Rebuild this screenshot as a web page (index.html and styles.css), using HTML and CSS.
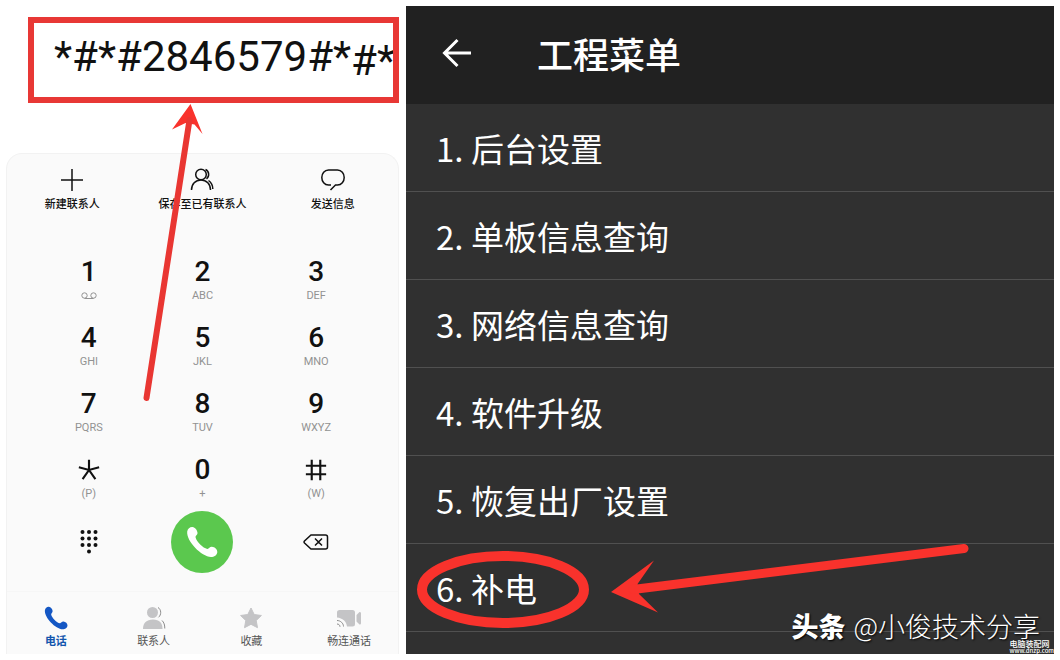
FILE: index.html
```html
<!DOCTYPE html>
<html lang="zh-CN">
<head>
<meta charset="utf-8">
<meta name="viewport" content="width=device-width, initial-scale=1">
<title>工程菜单</title>
<link rel="stylesheet" href="styles.css">
</head>
<body>
<main class="board">
  <section class="phone" aria-label="拨号">
    <div class="display">
      <output class="number">*#*#2846579#*<span class="number-tail">#*</span></output>
    </div>
    <div class="dialer">
      <div class="actions">
        <button class="action" type="button">
          <svg class="icon line" viewBox="0 0 24 24"><path d="M12 1v22M1 12h22"/></svg>
          <span>新建联系人</span>
        </button>
        <button class="action" type="button">
          <svg class="icon line" viewBox="0 0 24 24"><circle cx="11" cy="6.500" r="5.300"/><path d="M1.500 22c0-6 4-10 9.500-10s9.500 4 9.500 10M15.500 1.500c3.800 1.500 4.200 7 1 9.300M18.500 12.500c2.800 2 4.300 5 4.300 8.500"/></svg>
          <span>保存至已有联系人</span>
        </button>
        <button class="action" type="button">
          <svg class="icon line" viewBox="0 0 24 24"><path d="M10 17H7.500C3.500 17 .8 13.500 .8 9.500S3.500 2 7.500 2h9c4 0 6.700 3.500 6.700 7.500S20.500 17 16.500 17H14.500L9.500 22"/></svg>
          <span>发送信息</span>
        </button>
      </div>
      <div class="keys">
        <button class="key" type="button"><b>1</b><svg class="voicemail" viewBox="0 0 16 8"><circle cx="3.500" cy="3.500" r="2.700"/><circle cx="12.500" cy="3.500" r="2.700"/><path d="M3.500 6.500h9"/></svg></button>
        <button class="key" type="button"><b>2</b><small>ABC</small></button>
        <button class="key" type="button"><b>3</b><small>DEF</small></button>
        <button class="key" type="button"><b>4</b><small>GHI</small></button>
        <button class="key" type="button"><b>5</b><small>JKL</small></button>
        <button class="key" type="button"><b>6</b><small>MNO</small></button>
        <button class="key" type="button"><b>7</b><small>PQRS</small></button>
        <button class="key" type="button"><b>8</b><small>TUV</small></button>
        <button class="key" type="button"><b>9</b><small>WXYZ</small></button>
        <button class="key" type="button" aria-label="*"><svg class="symbol" viewBox="0 0 30 30"><path d="M15 5.500V15M5.500 12.500l9.500 2.500 9.500-2.500M9 23.500l6-8.500 6 8.500"/></svg><small>(P)</small></button>
        <button class="key" type="button"><b>0</b><small>+</small></button>
        <button class="key" type="button" aria-label="#"><svg class="symbol" viewBox="0 0 30 30"><path d="M11 5.500v19M19 5.500v19M5.500 11h19M5.500 19h19"/></svg><small>(W)</small></button>
      </div>
      <div class="call-row">
        <button class="tool" type="button" aria-label="键盘">
          <svg class="dots" viewBox="0 0 24 24"><g fill="#111"><circle cx="5.500" cy="2" r="2"/><circle cx="12" cy="2" r="2"/><circle cx="18.500" cy="2" r="2"/><circle cx="5.500" cy="8.500" r="2"/><circle cx="12" cy="8.500" r="2"/><circle cx="18.500" cy="8.500" r="2"/><circle cx="5.500" cy="15" r="2"/><circle cx="12" cy="15" r="2"/><circle cx="18.500" cy="15" r="2"/><circle cx="12" cy="21.500" r="2"/></g></svg>
        </button>
        <button class="call" type="button" aria-label="拨打">
          <svg class="handset" viewBox="0 0 32 32"><path d="M1.200 5.500C1.800 2.500 4 .8 6.500 1c2.600.3 4.700 3 5 5.800.2 2.200-2.300 3-1.900 4.700 1 4.300 7.500 10.600 11.600 11.400 1.700.3 2.500-2.300 4.700-2.100 3 .3 5.400 2.500 5.400 5.200 0 3-3.300 5-6.300 5C15.500 30.500.3 15.500 1.200 5.500z"/></svg>
        </button>
        <button class="tool" type="button" aria-label="删除">
          <svg class="icon line erase" viewBox="0 0 26 24"><path d="M8 5h14.500a2 2 0 0 1 2 2v10a2 2 0 0 1-2 2H8l-6.500-6a1.500 1.500 0 0 1 0-2zM12 8.500l7 7M19 8.500l-7 7"/></svg>
        </button>
      </div>
      <nav class="tabs">
        <a class="tab active" href="#phone">
          <svg class="icon" viewBox="0 0 32 32"><path d="M1.200 5.500C1.800 2.500 4 .8 6.500 1c2.600.3 4.700 3 5 5.800.2 2.200-2.300 3-1.900 4.700 1 4.300 7.500 10.600 11.600 11.400 1.700.3 2.500-2.300 4.700-2.100 3 .3 5.400 2.500 5.400 5.200 0 3-3.300 5-6.300 5C15.500 30.500.3 15.500 1.200 5.500z"/></svg>
          <span>电话</span>
        </a>
        <a class="tab" href="#contacts">
          <svg class="icon" viewBox="0 0 24 24"><circle cx="10.500" cy="6.500" r="5.500"/><path d="M1 23c0-6 3.500-9.500 10-9.500S20.500 17 20.500 23z"/><path class="edge" d="M16 1.500c3.500 2 3.500 7.500.5 9.800M20 14.500c2 1.800 2.800 4.500 2.800 8"/></svg>
          <span>联系人</span>
        </a>
        <a class="tab" href="#favorites">
          <svg class="icon" viewBox="0 0 24 24"><path stroke="#c4c4c6" stroke-linejoin="round" d="M12 2l3.200 6.500 7.200 1-5.200 5 1.300 7.200L12 18.300l-6.500 3.400 1.300-7.200-5.200-5 7.200-1z"/></svg>
          <span>收藏</span>
        </a>
        <a class="tab" href="#video">
          <svg class="icon" viewBox="0 0 24 24"><path d="M3 4h12.500a2.500 2.500 0 0 1 2.500 2.500V18a2.500 2.500 0 0 1-2.500 2.500H10C9.500 15.500 5.500 12 0 11.500V6.500A2.500 2.500 0 0 1 3 4zM19.500 9l3-3c1 0 1.500.5 1.500 1.500v9.500c0 1-.5 1.500-1.500 1.500l-3-3z"/><path class="edge" d="M0 14.500c3.500 0 6.500 2.800 6.500 6M0 18c1.800 0 3 1.200 3 2.800"/></svg>
          <span>畅连通话</span>
        </a>
      </nav>
    </div>
    <svg class="marks" viewBox="0 0 393 648" aria-hidden="true">
      <path d="M184.500 98L196.500 128 188.500 118.500 179.500 117 166 123.500z"/>
      <path d="M183.500 114L140.500 392" class="shaft thin"/>
    </svg>
  </section>

  <section class="menu" aria-label="工程菜单">
    <header class="bar">
      <button class="back" type="button" aria-label="返回">
        <svg viewBox="0 0 30 30"><path d="M29 15H3M15.500 2L2.500 15l13 13"/></svg>
      </button>
      <h1>工程菜单</h1>
    </header>
    <ul class="list">
      <li><a href="#m1">1. 后台设置</a></li>
      <li><a href="#m2">2. 单板信息查询</a></li>
      <li><a href="#m3">3. 网络信息查询</a></li>
      <li><a href="#m4">4. 软件升级</a></li>
      <li><a href="#m5">5. 恢复出厂设置</a></li>
      <li><a href="#m6">6. 补电</a></li>
    </ul>
    <svg class="marks" viewBox="0 0 648 648" aria-hidden="true">
      <ellipse class="ring" cx="97" cy="583.500" rx="81" ry="33.500"/>
      <path d="M205 586L248 554.500 231.500 578 233 588 252 606.500z"/>
      <path d="M227 583.500L558 542.500" class="shaft"/>
    </svg>
    <p class="credit"><b>头条</b>@小俊技术分享</p>
    <p class="site">电脑装配网<span>www.dnzp.com</span></p>
  </section>
</main>
</body>
</html>
```
FILE: styles.css
```css
* {
  box-sizing: border-box;
}

body {
  margin: 0;
  padding: 6px;
  background: #fff;
  font-family: Roboto, "Noto Sans CJK SC", sans-serif;
  color: #111;
}

button {
  padding: 0;
  border: 0;
  background: none;
  font: inherit;
  color: inherit;
}

a {
  color: inherit;
  text-decoration: none;
}

svg {
  display: block;
}

.board {
  display: grid;
  grid-template-columns: minmax(0, 393fr) minmax(0, 648fr);
  gap: 7px;
}

.phone,
.menu {
  position: relative;
}

.phone {
  display: flex;
  flex-direction: column;
}

.display {
  padding: 11px 0 50px 22px;
}

.number {
  display: block;
  height: 86px;
  padding: 10px 0 0 20px;
  border: 6px solid #e83835;
  overflow: hidden;
  font-size: 42px;
  line-height: 48px;
  white-space: nowrap;
}

.number-tail {
  position: relative;
  top: 4px;
}

.dialer {
  flex: 1;
  padding-top: 14px;
  border: 1px solid #f2f2f2;
  border-bottom: 0;
  border-radius: 16px 16px 0 0;
  background: #fafafa;
}

.actions {
  display: grid;
  grid-template-columns: repeat(3, 1fr);
}

.action,
.tab {
  display: flex;
  flex-direction: column;
  align-items: center;
  gap: 5px;
  font-size: 11px;
  line-height: 16px;
}

.action {
  font-weight: 500;
}

.icon {
  width: 24px;
  height: 24px;
}

.line {
  fill: none;
  stroke: #111;
  stroke-width: 1.5;
}

.keys {
  display: grid;
  grid-template-columns: repeat(3, 1fr);
  row-gap: 18px;
  margin: 42px 25px 0;
}

.key {
  display: flex;
  flex-direction: column;
  align-items: center;
  height: 48px;
}

.key b {
  font-size: 28px;
  font-weight: 500;
  line-height: 34px;
}

.key small {
  font-size: 11px;
  line-height: 14px;
  color: #929292;
}

.symbol {
  width: 32px;
  height: 34px;
  fill: none;
  stroke: #111;
  stroke-width: 2;
}

.voicemail {
  width: 16px;
  height: 8px;
  margin-top: 3px;
  fill: none;
  stroke: #929292;
}

.call-row {
  display: grid;
  grid-template-columns: repeat(3, 1fr);
  place-items: center;
  margin: 10px 25px 18px;
}

.dots {
  width: 24px;
  height: 24px;
}

.erase {
  width: 26px;
}

.call {
  display: grid;
  place-items: center;
  width: 62px;
  height: 62px;
  border-radius: 50%;
  background: #5bc84e;
}

.handset {
  width: 32px;
  height: 32px;
  fill: #fff;
}

.tabs {
  display: grid;
  grid-template-columns: repeat(4, 1fr);
  padding: 14px 0 4px;
  border-top: 1px solid #f6f6f6;
}

.tab {
  gap: 4px;
  color: #555;
  fill: #c4c4c6;
}

.edge {
  fill: none;
  stroke: #8c8c8c;
}

.active {
  color: #1255ad;
  fill: #1457c4;
  font-weight: 700;
}

.marks {
  position: absolute;
  top: 0;
  left: 0;
  width: 100%;
  height: 100%;
  fill: #f9322c;
  pointer-events: none;
}

.shaft,
.ring {
  fill: none;
  stroke: #f9322c;
  stroke-width: 9;
  stroke-linecap: round;
}

.ring {
  stroke-width: 10;
}

.thin {
  stroke: #e93632;
  stroke-width: 6;
}

.menu {
  min-height: calc(100vh - 12px);
  background: #303030;
  color: #fff;
  font-family: "Noto Sans CJK SC", sans-serif;
}

.bar {
  display: flex;
  align-items: center;
  gap: 65px;
  padding: 23px 36px 27px;
  background: #212121;
}

.back svg {
  width: 30px;
  height: 30px;
  fill: none;
  stroke: #fff;
  stroke-width: 3;
}

.bar h1 {
  margin: 0;
  font-size: 36px;
  font-weight: 500;
  line-height: 48px;
}

.list {
  margin: 0;
  padding: 0;
  list-style: none;
}

.list a {
  display: block;
  padding: 20px 30px 19px;
  border-bottom: 1px solid #505050;
  font-size: 33px;
  line-height: 48px;
}

.credit {
  position: absolute;
  right: 14px;
  bottom: 14px;
  margin: 0;
  font-size: 27px;
  font-weight: 300;
  line-height: 28px;
  text-shadow: 1px 1px 2px #000;
}

.credit b {
  margin-right: 8px;
  font-weight: 900;
}

.site {
  position: absolute;
  right: 0;
  bottom: 0;
  margin: 0;
  font-size: 8px;
  font-weight: 500;
  line-height: 8px;
}

.site span {
  display: block;
  font-size: 6px;
  line-height: 6px;
}
```
